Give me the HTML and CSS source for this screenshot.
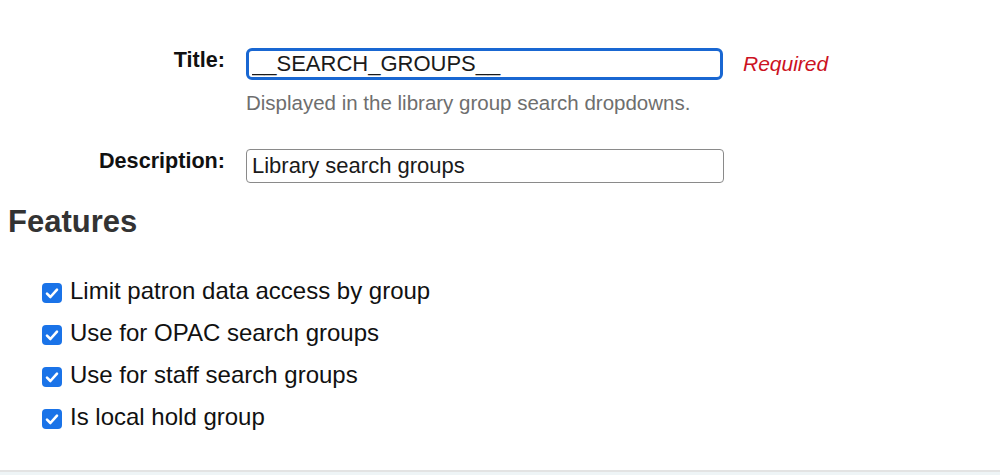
FILE: index.html
```html
<!DOCTYPE html>
<html lang="en">
<head>
<meta charset="utf-8">
<title>Library group</title>
<link rel="stylesheet" href="styles.css">
</head>
<body>
<div class="page">
  <form class="form">
    <div class="row row-title">
      <label class="lbl" for="title">Title:</label>
      <div class="field">
        <div class="inline">
          <input id="title" class="input input-focus" type="text" value="__SEARCH_GROUPS__">
          <span class="req">Required</span>
        </div>
        <div class="hint">Displayed in the library group search dropdowns.</div>
      </div>
    </div>
    <div class="row row-desc">
      <label class="lbl" for="desc">Description:</label>
      <div class="field">
        <input id="desc" class="input" type="text" value="Library search groups">
      </div>
    </div>
  </form>

  <h2 class="heading">Features</h2>

  <ul class="checks">
    <li class="check"><span class="box"><svg viewBox="0 0 20 20" width="20" height="20"><path d="M5 10.6 L8.4 14 L15 6.6" fill="none" stroke="#fff" stroke-width="2.6" stroke-linecap="round" stroke-linejoin="round"/></svg></span><span class="text">Limit patron data access by group</span></li>
    <li class="check"><span class="box"><svg viewBox="0 0 20 20" width="20" height="20"><path d="M5 10.6 L8.4 14 L15 6.6" fill="none" stroke="#fff" stroke-width="2.6" stroke-linecap="round" stroke-linejoin="round"/></svg></span><span class="text">Use for OPAC search groups</span></li>
    <li class="check"><span class="box"><svg viewBox="0 0 20 20" width="20" height="20"><path d="M5 10.6 L8.4 14 L15 6.6" fill="none" stroke="#fff" stroke-width="2.6" stroke-linecap="round" stroke-linejoin="round"/></svg></span><span class="text">Use for staff search groups</span></li>
    <li class="check"><span class="box"><svg viewBox="0 0 20 20" width="20" height="20"><path d="M5 10.6 L8.4 14 L15 6.6" fill="none" stroke="#fff" stroke-width="2.6" stroke-linecap="round" stroke-linejoin="round"/></svg></span><span class="text">Is local hold group</span></li>
  </ul>

  <footer class="footer"></footer>
</div>
</body>
</html>
```

FILE: styles.css
```css
html, body {
  margin: 0;
  padding: 0;
  background: #ffffff;
  overflow: hidden;
}

body {
  font-family: "Liberation Sans", Arial, Helvetica, sans-serif;
  color: #111;
}

.page {
  width: 1000px;
}

.form {
  padding-top: 47px;
}

.row {
  display: grid;
  grid-template-columns: 225px 1fr;
  column-gap: 21px;
  align-items: start;
}

.row-desc {
  margin-top: 33px;
}

.lbl {
  text-align: right;
  font-size: 21.6px;
  font-weight: bold;
  color: #111;
  line-height: normal;
}

.field {
  margin-top: 1px;
}

.inline {
  display: flex;
  align-items: center;
}

.input {
  box-sizing: border-box;
  width: 477px;
  margin: 0;
  font-family: "Liberation Sans", Arial, Helvetica, sans-serif;
  font-size: 22px;
  color: #1a1a1a;
  background: #fff;
  outline: none;
}

.input-focus {
  height: 32px;
  border: 3px solid #1967d2;
  border-radius: 6px;
  padding: 0 3px;
}

.row-desc .input {
  height: 34px;
  border: 1px solid #8a8a8a;
  border-radius: 4px;
  padding: 0 5px;
  width: 478px;
}

.req {
  margin-left: 20px;
  font-size: 21px;
  font-style: italic;
  color: #cc1122;
}

.hint {
  margin-top: 11px;
  font-size: 20.5px;
  color: #6e6e6e;
  line-height: normal;
}

.heading {
  margin: 21px 0 0 0;
  padding-left: 8px;
  font-size: 31px;
  font-weight: bold;
  color: #333;
  line-height: normal;
}

.checks {
  list-style: none;
  margin: 37px 0 0 0;
  padding: 0 0 0 42px;
  display: flex;
  flex-direction: column;
  gap: 14px;
}

.check {
  display: flex;
  align-items: center;
  gap: 8px;
  font-size: 24px;
  line-height: normal;
  color: #111;
}

.box {
  display: flex;
  width: 20px;
  height: 20px;
  border-radius: 4px;
  background: #1a73e8;
  margin-top: 3px;
  flex: none;
}

.box svg {
  display: block;
}

.footer {
  margin-top: 39px;
  height: 20px;
  border-top: 2px solid #e3e3e3;
  background: #eef4f6;
}
```
